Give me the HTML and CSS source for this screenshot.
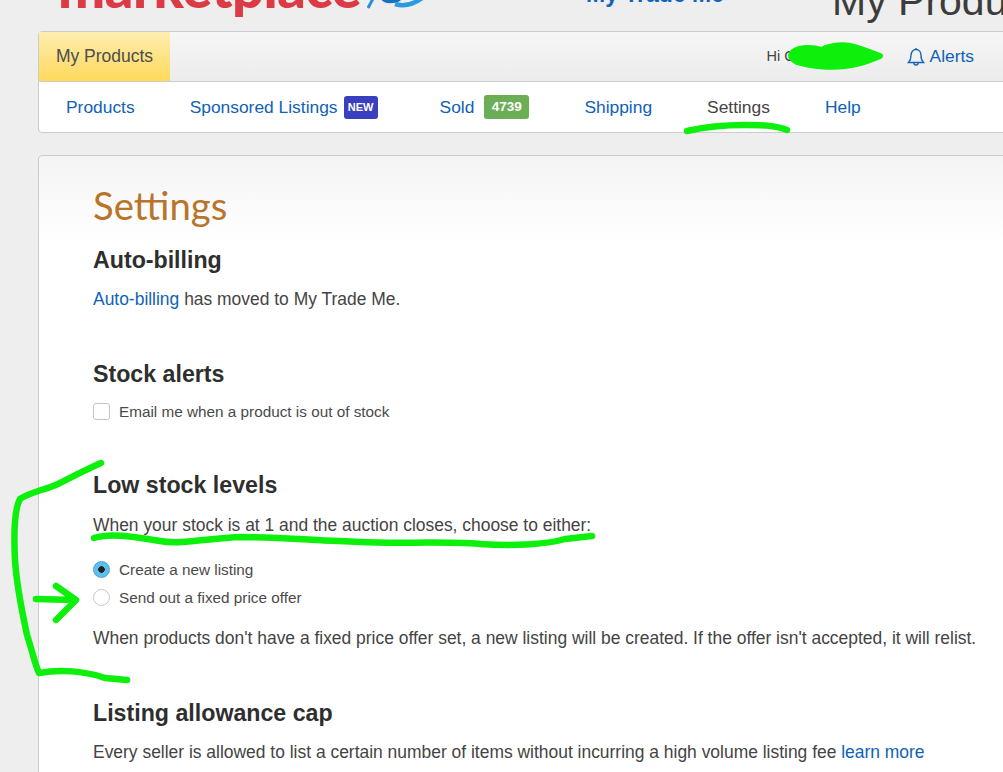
FILE: index.html
```html
<!DOCTYPE html>
<html lang="en">
<head>
    <meta charset="UTF-8">
    <title>My Products - Settings</title>
    <link rel="stylesheet" href="styles.css">
</head>
<body>
    <div class="page">
        <header class="top-bar">
            <div class="logo">marketplace
                <svg class="logo-mark" width="70" height="14" viewBox="0 0 70 14">
                    <path d="M1 13 L8 0" stroke="#2a8fd8" stroke-width="3" fill="none"/>
                    <path d="M13 0 C13 9 24 10 33 6 L38 0 Z" fill="#1670c0"/>
                    <path d="M28 9 C38 12 48 9 58 1" stroke="#2a9be0" stroke-width="4.500" fill="none"/>
                </svg>
            </div>
            <a class="trade-link" href="#">My Trade Me</a>
            <div class="page-name">My Products</div>
        </header>

        <div class="nav-box">
            <div class="nav-top">
                <div class="tab">My Products</div>
                <div class="user-area">
                    <span class="hi">Hi C</span>
                    <a class="alerts" href="#">
                        <svg width="18" height="20" viewBox="0 0 18 20" fill="none" stroke="#1565b8" stroke-width="1.4">
                            <path d="M1.5 15.5 C3.5 13.5 4 12 4 8.5 C4 5 6 2.5 9 2.5 C12 2.5 14 5 14 8.5 C14 12 14.500 13.500 16.500 15.500 Z"/>
                            <path d="M9 1 V2.500"/>
                            <path d="M6.800 16 C7 18.600 11 18.600 11.200 16"/>
                        </svg>
                        Alerts
                    </a>
                </div>
            </div>
            <nav class="nav-links">
                <a class="nav-link" href="#">Products</a>
                <a class="nav-link link-sponsored" href="#">Sponsored Listings <span class="badge badge-new">NEW</span></a>
                <a class="nav-link" href="#">Sold <span class="badge badge-count">4739</span></a>
                <a class="nav-link" href="#">Shipping</a>
                <a class="nav-link nav-current" href="#">Settings</a>
                <a class="nav-link" href="#">Help</a>
            </nav>
        </div>

        <main class="card">
            <h1>Settings</h1>

            <section class="block block-billing">
                <h2>Auto-billing</h2>
                <p><a href="#">Auto-billing</a> has moved to My Trade Me.</p>
            </section>

            <section class="block block-alerts">
                <h2>Stock alerts</h2>
                <label class="option"><span class="checkbox"></span>Email me when a product is out of stock</label>
            </section>

            <section class="block block-low">
                <h2>Low stock levels</h2>
                <p class="choose">When your stock is at 1 and the auction closes, choose to either:</p>
                <label class="option"><span class="radio radio-on"></span>Create a new listing</label>
                <label class="option"><span class="radio"></span>Send out a fixed price offer</label>
                <p class="note">When products don't have a fixed price offer set, a new listing will be created. If the offer isn't accepted, it will relist.</p>
            </section>

            <section class="block">
                <h2>Listing allowance cap</h2>
                <p>Every seller is allowed to list a certain number of items without incurring a high volume listing fee <a href="#">learn more</a></p>
            </section>
        </main>
    </div>

    <!-- green marker scribbles on top of the screenshot -->
    <svg class="scribbles" width="1003" height="772" viewBox="0 0 1003 772" fill="none" stroke="#0cf00c" stroke-linecap="round" stroke-linejoin="round">
        <path stroke-width="6" d="M793 52 C800 47 812 47 822 50 C830 45 845 44 855 47 C865 50 875 54 880 56 C870 60 860 65 845 66 C830 68 810 66 797 62 C790 58 790 55 793 52 Z" fill="#0cf00c"/>
        <path stroke-width="6.500" d="M687 131 C700 128 720 125 745 125 C760 125 775 125 787 130"/>
        <path stroke-width="6.500" d="M101 463 C85 470 70 478 58 484 C45 490 30 492 20 499 C14 510 14 540 15 560 C17 590 22 610 27 635 C32 650 35 665 39 673 C60 669 85 671 105 678 L127 680"/>
        <path stroke-width="6.500" d="M94 538 C110 533 130 536 160 541 C180 545 210 538 240 537 C280 537 320 541 360 542 C400 544 440 541 480 544 C510 546 545 545 565 539 L592 536"/>
        <path stroke-width="6.500" d="M36 599 L75 600 M56 586 L76 600 L56 620"/>
    </svg>
</body>
</html>
```

FILE: styles.css
```css
html, body {
    margin: 0;
    height: 100%;
    overflow: hidden;
}

body {
    background-color: #eeeeee;
    font-family: "Liberation Sans", Arial, sans-serif;
    color: #444;
    position: relative;
}

a {
    color: #0f62b5;
    text-decoration: none;
}

.page {
    width: 1040px;
    margin-left: 38px;
}

/* top of the page is scrolled off, only the bottoms of the words show */
.top-bar {
    height: 31px;
    overflow: hidden;
    position: relative;
}

.logo {
    position: absolute;
    left: 20px;
    bottom: 16px;
    font-family: "Lato", sans-serif;
    font-weight: 900;
    font-size: 56px;
    line-height: 57px;
    letter-spacing: -0.5px;
    color: #dc3a45;
    white-space: nowrap;
}

.logo-mark {
    position: absolute;
    left: 309px;
    top: 37px;
}

.trade-link {
    position: absolute;
    left: 548px;
    bottom: 27px;
    font-weight: bold;
    font-size: 23px;
    line-height: 20px;
    color: #0f62c0;
    white-space: nowrap;
}

.page-name {
    position: absolute;
    left: 794px;
    bottom: 7px;
    font-size: 41px;
    line-height: 46px;
    color: #3c3c3c;
    white-space: nowrap;
}

.nav-box {
    background: white;
    border: 1px solid #cccccc;
    border-radius: 4px 0 0 4px;
    height: 100px;
}

.nav-top {
    height: 49px;
    display: flex;
    justify-content: space-between;
    background: linear-gradient(#f6f6f6, #ececec);
    border-bottom: 1px solid #cccccc;
}

.tab {
    width: 131px;
    line-height: 49px;
    text-align: center;
    font-size: 17.500px;
    color: #4d4d4d;
    background: linear-gradient(#fdeeb0, #ffd95c);
}

.user-area {
    display: flex;
    align-items: center;
    padding-right: 103px;
}

.hi {
    font-size: 14.500px;
    width: 140px;
    margin-top: -1px;
}

.alerts {
    display: flex;
    align-items: center;
    gap: 5px;
    font-size: 17.400px;
}

.nav-links {
    display: flex;
    align-items: center;
    height: 50px;
    padding-left: 27px;
    font-size: 17.400px;
}

.nav-link {
    margin-right: 55px;
    white-space: nowrap;
    display: flex;
    align-items: center;
    gap: 6px;
}

.link-sponsored {
    margin-right: 62px;
}

.nav-current {
    color: #444;
}

.badge {
    display: inline-block;
    color: white;
    font-weight: bold;
    border-radius: 3px;
    text-align: center;
}

.badge-new {
    width: 34px;
    line-height: 23px;
    font-size: 11px;
    background: #3a3fc0;
}

.badge-count {
    width: 45px;
    line-height: 24px;
    font-size: 13.500px;
    margin-left: 4px;
    background: #6cae55;
}

.card {
    margin-top: 22px;
    height: 700px;
    box-sizing: border-box;
    padding: 27px 0 0 54px;
    background: linear-gradient(#f4f4f4, #ffffff 85px);
    border: 1px solid #cccccc;
    border-radius: 4px 0 0 0;
}

h1 {
    margin: 0;
    font-family: "Lato", sans-serif;
    font-weight: 400;
    font-size: 38.300px;
    line-height: 44px;
    color: #b8752a;
}

h2 {
    margin: 0;
    font-size: 23.200px;
    line-height: 28px;
    font-weight: bold;
    color: #2e2e2e;
}

p {
    margin: 0;
    font-size: 17.450px;
    line-height: 22px;
}

.block p {
    margin-top: 14px;
}

.block-billing {
    margin-top: 19px;
}

.block-alerts {
    margin-top: 50px;
}

.block-low {
    margin-top: 46px;
}

.block-low + .block {
    margin-top: 50px;
}

.option {
    display: flex;
    align-items: center;
    box-sizing: border-box;
    height: 28px;
    padding-top: 2px;
    font-size: 15.300px;
    color: #4a4a4a;
}

.block-alerts .option {
    margin-top: 9px;
}

.block .choose {
    margin-top: 15px;
    margin-bottom: 19px;
}

.block .note {
    margin-top: 16px;
}

.checkbox {
    box-sizing: border-box;
    width: 17px;
    height: 17px;
    margin: -2px 9px 0 0;
    background: white;
    border: 1.500px solid #c4c4c4;
    border-radius: 3px;
}

.radio {
    box-sizing: border-box;
    width: 17px;
    height: 17px;
    margin: -2px 9px 0 0;
    background: white;
    border: 1.500px solid #c8c8c8;
    border-radius: 50%;
}

.radio-on {
    border-color: #4f9fd0;
    background: radial-gradient(circle, #222 0, #222 3px, #5cc0ee 3.500px);
}

.scribbles {
    position: absolute;
    left: 0;
    top: 0;
}
```
